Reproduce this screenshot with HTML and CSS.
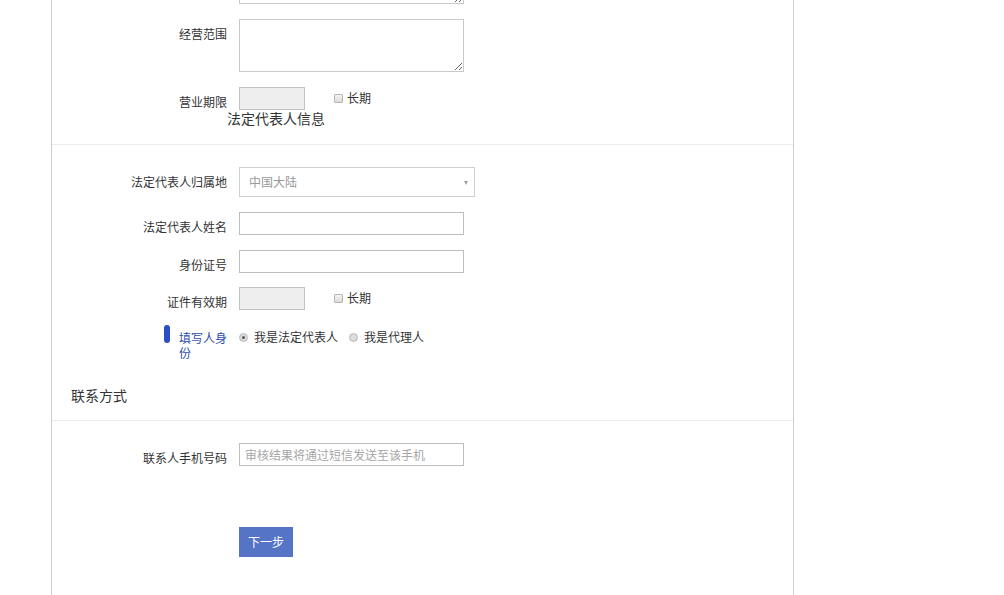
FILE: index.html
```html
<!DOCTYPE html>
<html lang="zh-CN">
<head>
<meta charset="utf-8">
<title>法定代表人信息</title>
<link rel="stylesheet" href="styles.css">
</head>
<body>
<div class="panel">
  <div class="row">
    <div class="label"></div>
    <textarea class="area"></textarea>
  </div>
  <div class="row">
    <label class="label">经营范围</label>
    <textarea class="area"></textarea>
  </div>
  <div class="row">
    <label class="label">营业期限</label>
    <div class="date"></div>
    <div class="check"><span class="box"></span><span>长期</span></div>
  </div>
  <div class="sub-title">法定代表人信息</div>
  <div class="divider"></div>

  <div class="row row-select">
    <label class="label">法定代表人归属地</label>
    <div class="select"><span>中国大陆</span><span class="caret"></span></div>
  </div>
  <div class="row">
    <label class="label">法定代表人姓名</label>
    <input class="input" type="text">
  </div>
  <div class="row">
    <label class="label">身份证号</label>
    <input class="input" type="text">
  </div>
  <div class="row row-tight">
    <label class="label">证件有效期</label>
    <div class="date"></div>
    <div class="check"><span class="box"></span><span>长期</span></div>
  </div>
  <div class="row">
    <div class="label label-id"><span class="bar"></span><span class="id-text">填写人身份</span></div>
    <div class="radios">
      <span class="radio checked"></span><span class="radio-text">我是法定代表人</span>
      <span class="radio"></span><span class="radio-text">我是代理人</span>
    </div>
  </div>

  <div class="section-title">联系方式</div>

  <div class="row row-select">
    <label class="label">联系人手机号码</label>
    <input class="input phone" type="text" placeholder="审核结果将通过短信发送至该手机">
  </div>
  <div class="actions">
    <button class="btn" type="button">下一步</button>
  </div>
</div>
</body>
</html>
```

FILE: styles.css
```css
html, body {
  margin: 0;
  padding: 0;
  background: #fff;
}
body {
  font-family: "Noto Sans CJK SC", "Noto Sans", "Liberation Sans", sans-serif;
  font-size: 12px;
  color: #333;
  overflow: hidden;
}
.panel {
  margin: -49px 0 0 51px;
  width: 743px;
  box-sizing: border-box;
  border-left: 1px solid #cfcfcf;
  border-right: 1px solid #cfcfcf;
  padding-bottom: 120px;
}
.row {
  display: flex;
  align-items: flex-start;
  margin-top: 15px;
}
.panel > .row:first-child {
  margin-top: 0;
}
.row-select {
  margin-top: 22px;
}
.row-tight {
  margin-top: 14px;
}
.label {
  flex: none;
  width: 175px;
  box-sizing: border-box;
  padding-top: 7px;
  line-height: 16px;
  font-size: 12px;
  text-align: right;
  color: #333;
  margin-right: 12px;
}
.area {
  display: block;
  width: 225px;
  height: 53px;
  box-sizing: border-box;
  border: 1px solid #c9c9c9;
  margin: 0;
  padding: 4px;
  font: inherit;
  outline: none;
}
.input {
  display: block;
  width: 225px;
  height: 23px;
  box-sizing: border-box;
  border: 1px solid #bdbdbd;
  margin: 0;
  padding: 0 5px;
  font-family: inherit;
  font-size: 12px;
  color: #333;
  outline: none;
}
.input::placeholder {
  color: #a6a6a6;
}
.date {
  width: 66px;
  height: 23px;
  box-sizing: border-box;
  border: 1px solid #c2c2c2;
  background: #eeeeee;
}
.check {
  display: flex;
  align-items: center;
  height: 22px;
  margin-left: 29px;
  line-height: 16px;
  color: #333;
}
.box {
  width: 9px;
  height: 9px;
  box-sizing: border-box;
  border: 1px solid #b4b4b4;
  border-radius: 1px;
  background: linear-gradient(#f4f4f4, #dcdcdc);
  margin-right: 4px;
}
.sub-title {
  padding-left: 175px;
  font-size: 14px;
  line-height: 16px;
  color: #333;
  margin-bottom: 18px;
}
.divider {
  border-top: 1px solid #ececec;
}
.select {
  position: relative;
  display: flex;
  align-items: center;
  width: 236px;
  height: 30px;
  box-sizing: border-box;
  border: 1px solid #cfcfcf;
  padding-left: 9px;
  color: #999;
  line-height: 16px;
}
.caret {
  position: absolute;
  right: 6px;
  top: 13px;
  width: 0;
  height: 0;
  border-left: 2.5px solid transparent;
  border-right: 2.5px solid transparent;
  border-top: 4px solid #a0a0a0;
}
.label-id {
  display: flex;
  justify-content: flex-end;
  align-items: flex-start;
  padding-top: 0;
}
.bar {
  width: 6px;
  height: 18px;
  border-radius: 3px;
  background: #2a4fc2;
  margin-right: 9px;
}
.id-text {
  width: 48px;
  padding-top: 5px;
  line-height: 15px;
  text-align: left;
  color: #2b4db0;
  word-break: break-all;
}
.radios {
  display: flex;
  align-items: center;
  height: 16px;
  padding-top: 4px;
  line-height: 16px;
  color: #333;
}
.radio {
  width: 9px;
  height: 9px;
  box-sizing: border-box;
  border: 1px solid #b9b9b9;
  border-radius: 50%;
  background: radial-gradient(circle, #e2e2e2 0, #d4d4d4 100%);
  margin-right: 6px;
  position: relative;
}
.radio.checked::after {
  content: "";
  position: absolute;
  left: 2px;
  top: 2px;
  width: 3px;
  height: 3px;
  border-radius: 50%;
  background: #555;
}
.radio-text {
  margin-right: 11px;
}
.section-title {
  margin-top: 25px;
  padding: 0 0 15px 19px;
  font-size: 14px;
  line-height: 20px;
  color: #333;
  border-bottom: 1px solid #ececec;
}
.actions {
  margin-top: 61px;
  padding-left: 187px;
}
.btn {
  display: block;
  width: 54px;
  height: 30px;
  margin: 0;
  padding: 0;
  border: none;
  background: #5574c5;
  color: #fff;
  font-family: inherit;
  font-size: 12px;
  line-height: 30px;
  cursor: pointer;
}
```
